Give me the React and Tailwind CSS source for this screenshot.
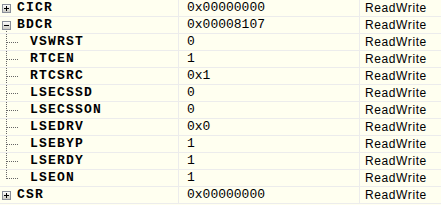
import React from 'react'

const ROWS = [
  { name: 'CICR', value: '0x00000000', kind: 'plus' },
  { name: 'BDCR', value: '0x00008107', kind: 'minus' },
  { name: 'VSWRST', value: '0', kind: 'child' },
  { name: 'RTCEN', value: '1', kind: 'child' },
  { name: 'RTCSRC', value: '0x1', kind: 'child' },
  { name: 'LSECSSD', value: '0', kind: 'child' },
  { name: 'LSECSSON', value: '0', kind: 'child' },
  { name: 'LSEDRV', value: '0x0', kind: 'child' },
  { name: 'LSEBYP', value: '1', kind: 'child' },
  { name: 'LSERDY', value: '1', kind: 'child' },
  { name: 'LSEON', value: '1', kind: 'last' },
  { name: 'CSR', value: '0x00000000', kind: 'plus' }
]

// square +/- toggle as in the old win32 tree
function Toggle({ open, line }) {
  return (
    <svg width="17" height="16" className="shrink-0">
      <defs>
        <linearGradient id={open ? 'gm' : 'gp'} x1="0" y1="0" x2="0" y2="1">
          <stop offset="0" stopColor="#ffffff" />
          <stop offset="1" stopColor="#c8c8c0" />
        </linearGradient>
      </defs>
      <rect x="2.5" y="4.5" width="8" height="8" fill={`url(#${open ? 'gm' : 'gp'})`} stroke="#8a8f9a" />
      <rect x="4" y="8" width="5" height="1" fill="#000" />
      {!open && <rect x="6" y="6" width="1" height="5" fill="#000" />}
      {line && <line x1="6.5" y1="14" x2="6.5" y2="16" stroke="#666" strokeDasharray="1 1" />}
    </svg>
  )
}

function Branch({ last }) {
  return (
    <svg width="30" height="16" className="shrink-0">
      <line x1="6.5" y1="0" x2="6.5" y2={last ? 9 : 16} stroke="#666" strokeDasharray="1 1" />
      <line x1="7" y1="8.5" x2="18" y2="8.5" stroke="#666" strokeDasharray="1 1" />
    </svg>
  )
}

export default function App() {
  return (
    <div className="w-[441px] h-[205px] bg-[#fffff0] overflow-hidden">
      {ROWS.map((r) => (
        <div key={r.name} className="flex h-[17px] border-b border-[#ececec]">
          <div className="w-[178px] h-4 flex items-center shrink-0">
            {r.kind === 'plus' && <Toggle open={false} />}
            {r.kind === 'minus' && <Toggle open line />}
            {(r.kind === 'child' || r.kind === 'last') && <Branch last={r.kind === 'last'} />}
            <span
              className="font-bold text-[13px] tracking-[1.2px] text-black leading-4"
              style={{ fontFamily: '"Liberation Mono", "DejaVu Sans Mono", monospace' }}
            >
              {r.name}
            </span>
          </div>
          <div className="w-[181px] h-4 border-l border-[#ececec] pl-2 flex items-center shrink-0">
            <span
              className="text-[13px] text-black leading-4"
              style={{ fontFamily: '"Liberation Mono", "Courier New", monospace' }}
            >
              {r.value}
            </span>
          </div>
          <div className="flex-1 h-4 border-l border-[#ececec] pl-[5px] flex items-center">
            <span
              className="text-[12px] tracking-[0.6px] text-black leading-4"
              style={{ fontFamily: '"Liberation Sans", Arial, sans-serif' }}
            >
              ReadWrite
            </span>
          </div>
        </div>
      ))}
    </div>
  )
}
